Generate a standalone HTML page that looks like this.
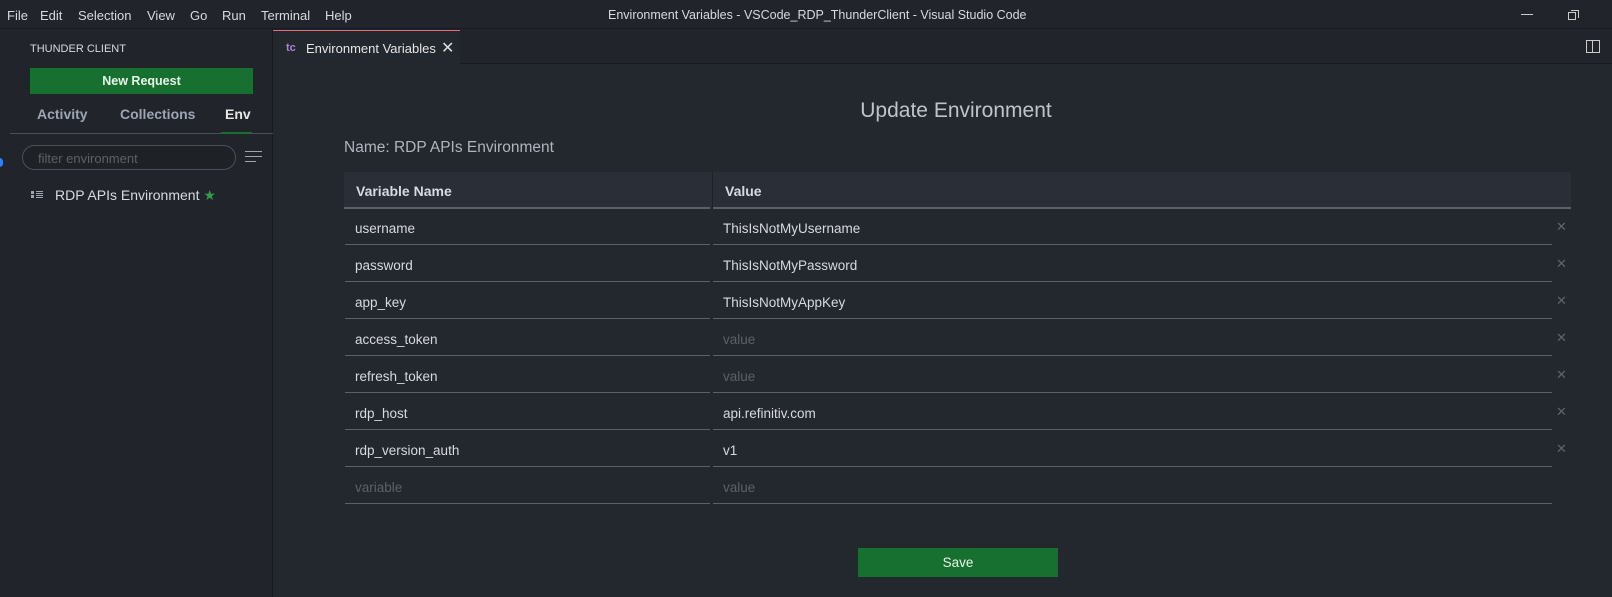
<!DOCTYPE html>
<html><head><meta charset="utf-8"><style>
*{margin:0;padding:0;box-sizing:border-box}
body{width:1612px;height:597px;overflow:hidden;background:#23272e;font-family:"Liberation Sans",sans-serif;color:#d7dae0;position:relative;font-size:13px}
.abs{position:absolute}
.title{left:0;top:0;width:1612px;height:29px;background:#21252b;border-bottom:1px solid #181a1f}
.menu span{position:absolute;top:8px;font-size:13px;color:#d7dae0}
.act{left:0;top:29px;width:10px;height:568px;background:#21252b}
.side{left:10px;top:29px;width:263px;height:568px;background:#21252b;border-right:1px solid #181a1f}
.tabbar{left:273px;top:29px;width:1339px;height:35px;background:#21252b;border-bottom:1px solid #181a1f}
.tab{left:273px;top:30px;width:187px;height:35px;background:#23272e;border-top:1px solid #e06c75}
.row{position:absolute;left:344px;width:1227px;height:37px}
.c1{position:absolute;left:1px;width:365px;height:37px;border-bottom:1px solid #5c6068}
.c2{position:absolute;left:369px;width:839px;height:37px;border-bottom:1px solid #5c6068}
.c1 span,.c2 span{position:absolute;left:10px;top:13px;font-size:13.5px;color:#d7dae0}
.ph{color:#5c6068!important}
.x{position:absolute;left:1212px;top:11px;color:#5f646d;font-size:13px}
</style></head><body>
<div class="abs title menu">
<span style="left:7px">File</span><span style="left:40px">Edit</span><span style="left:78px">Selection</span><span style="left:147px">View</span><span style="left:190px">Go</span><span style="left:222px">Run</span><span style="left:261px">Terminal</span><span style="left:325px">Help</span>
<span style="left:608px;font-size:12.5px">Environment Variables - VSCode_RDP_ThunderClient - Visual Studio Code</span>
<div class="abs" style="left:1521px;top:14px;width:12px;height:1px;background:#ccc"></div>
<div class="abs" style="left:1568px;top:12px;width:8px;height:8px;border:1px solid #ccc"></div>
<div class="abs" style="left:1571px;top:10px;width:8px;height:8px;border-top:1px solid #ccc;border-right:1px solid #ccc"></div>
</div>
<div class="abs act"><div class="abs" style="left:-4px;top:129px;width:7px;height:9px;border-radius:4px;background:#2f81f7"></div></div>
<div class="abs side">
<div class="abs" style="left:20px;top:14px;font-size:11px;color:#d7dae0">THUNDER CLIENT</div>
<div class="abs" style="left:20px;top:39px;width:223px;height:26px;background:#17702f;color:#e8f5ea;font-weight:bold;font-size:12.5px;text-align:center;line-height:26px">New Request</div>
<div class="abs" style="left:27px;top:77px;font-size:14px;font-weight:bold;color:#9da5b4">Activity</div>
<div class="abs" style="left:110px;top:77px;font-size:14px;font-weight:bold;color:#9da5b4">Collections</div>
<div class="abs" style="left:215px;top:77px;font-size:14px;font-weight:bold;color:#e6e6e6">Env</div>
<div class="abs" style="left:0;top:104px;width:263px;height:1px;background:#4b5058"></div>
<div class="abs" style="left:211px;top:103px;width:31px;height:2px;background:#17702f"></div>
<div class="abs" style="left:12px;top:116px;width:214px;height:25px;border:1px solid #4b5058;border-radius:13px;background:#1e2227"><span style="position:absolute;left:15px;top:5px;color:#5c6068;font-size:13px">filter environment</span></div>
<div class="abs" style="left:235px;top:122px;width:17px;height:1px;background:#9da5b4;box-shadow:0 5px 0 #9da5b4"></div><div class="abs" style="left:235px;top:132px;width:11px;height:1px;background:#9da5b4"></div>
<div class="abs" style="left:21px;top:162px;width:3px;height:3px;background:#9da5b4;box-shadow:0 4px 0 #9da5b4"></div>
<div class="abs" style="left:26px;top:162px;width:7px;height:1px;background:#9da5b4;box-shadow:0 2px 0 #9da5b4,0 4px 0 #9da5b4,0 6px 0 #9da5b4"></div>
<div class="abs" style="left:45px;top:158px;font-size:14px;color:#d7dae0">RDP APIs Environment <span style="color:#2ea043">★</span></div>
</div>
<div class="abs tabbar"><div class="abs" style="left:1313px;top:11px;width:14px;height:13px;border:1px solid #ccc"><div class="abs" style="left:5px;top:0;width:1px;height:11px;background:#ccc"></div></div></div>
<div class="abs tab">
<span class="abs" style="left:13px;top:11px;color:#b57edc;font-size:11px;font-weight:bold">tc</span>
<span class="abs" style="left:33px;top:10px;font-size:13px;color:#e6e6e6">Environment Variables</span>
<span class="abs" style="left:168px;top:7px;font-size:16px;color:#ddd">✕</span>
</div>
<div class="abs" style="left:0;width:1612px;top:99px;text-align:center;padding-left:300px;font-size:21px;color:#bfc3cb">Update Environment</div>
<div class="abs" style="left:344px;top:139px;font-size:15.5px;color:#b0b4bc">Name: RDP APIs Environment</div>
<div class="abs" style="left:344px;top:172px;width:1227px;height:37px;background:#2a2e36">
<div class="abs" style="left:0;top:35px;width:366px;height:2px;background:#5c6068"></div>
<div class="abs" style="left:368px;top:0;width:1px;height:37px;background:#1e2227"></div>
<div class="abs" style="left:369px;top:35px;width:858px;height:2px;background:#5c6068"></div>
<span class="abs" style="left:12px;top:11px;font-weight:bold;font-size:14px;color:#d7dae0">Variable Name</span>
<span class="abs" style="left:381px;top:11px;font-weight:bold;font-size:14px;color:#d7dae0">Value</span>
</div>
<div class="row" style="top:208px"><div class="c1"><span>username</span></div><div class="c2"><span>ThisIsNotMyUsername</span></div><span class="x">✕</span></div>
<div class="row" style="top:245px"><div class="c1"><span>password</span></div><div class="c2"><span>ThisIsNotMyPassword</span></div><span class="x">✕</span></div>
<div class="row" style="top:282px"><div class="c1"><span>app_key</span></div><div class="c2"><span>ThisIsNotMyAppKey</span></div><span class="x">✕</span></div>
<div class="row" style="top:319px"><div class="c1"><span>access_token</span></div><div class="c2"><span class="ph">value</span></div><span class="x">✕</span></div>
<div class="row" style="top:356px"><div class="c1"><span>refresh_token</span></div><div class="c2"><span class="ph">value</span></div><span class="x">✕</span></div>
<div class="row" style="top:393px"><div class="c1"><span>rdp_host</span></div><div class="c2"><span>api.refinitiv.com</span></div><span class="x">✕</span></div>
<div class="row" style="top:430px"><div class="c1"><span>rdp_version_auth</span></div><div class="c2"><span>v1</span></div><span class="x">✕</span></div>
<div class="row" style="top:467px"><div class="c1"><span class="ph">variable</span></div><div class="c2"><span class="ph">value</span></div></div>
<div class="abs" style="left:858px;top:548px;width:200px;height:29px;background:#17702f;color:#e8f5ea;text-align:center;line-height:29px;font-size:13.5px">Save</div>
</body></html>
